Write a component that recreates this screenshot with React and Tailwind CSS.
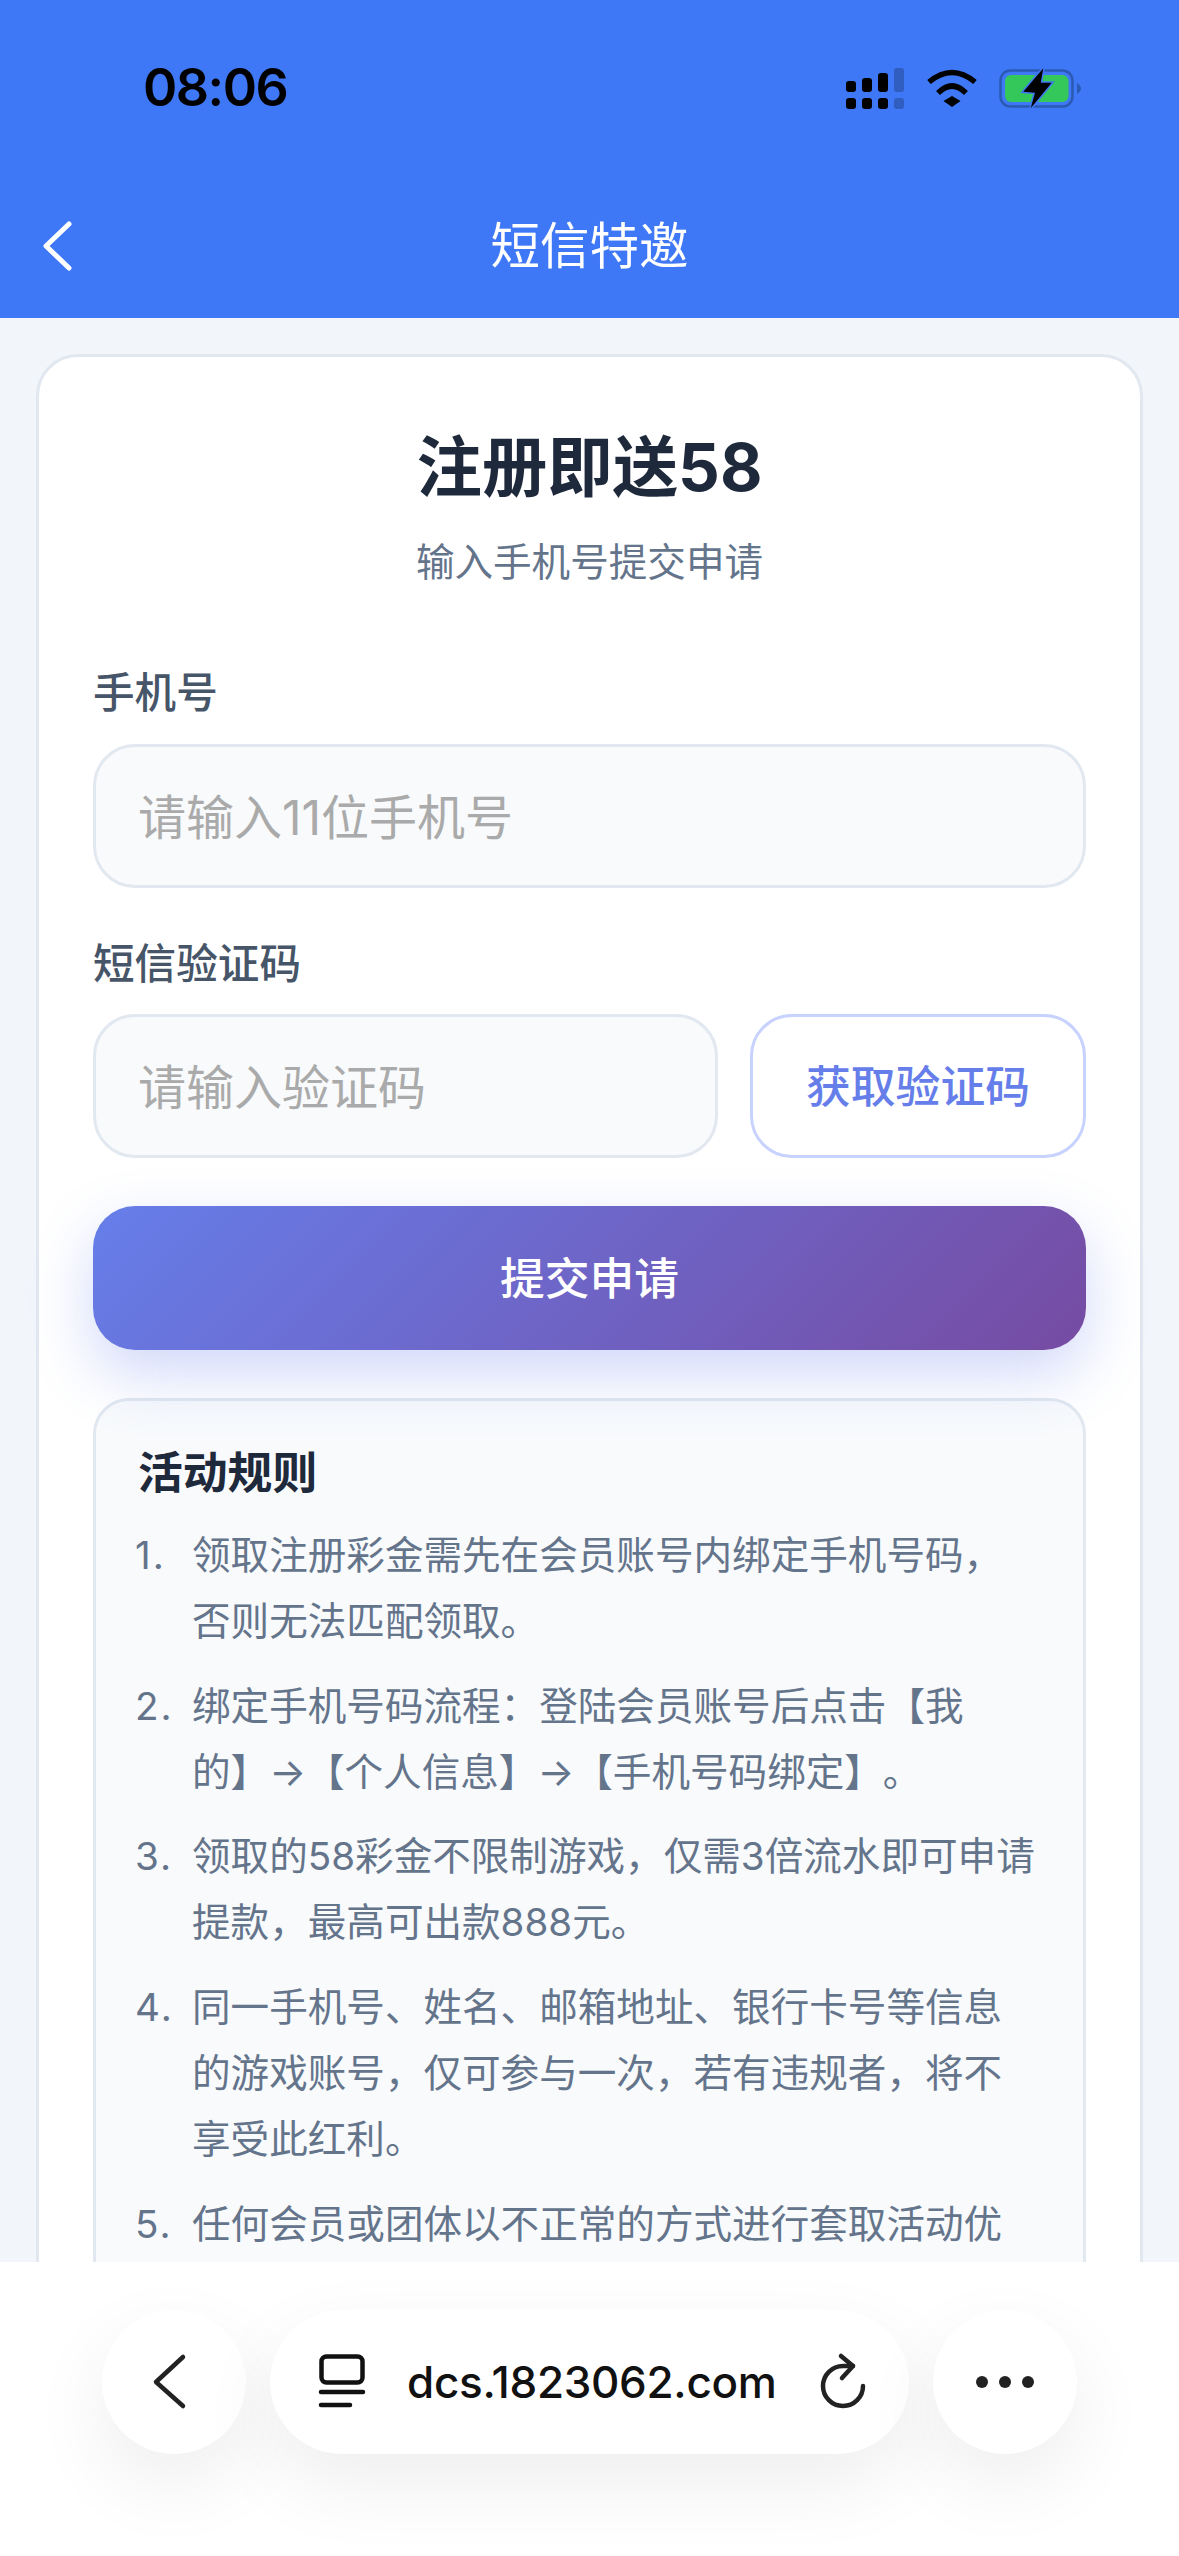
import React from "react";

const rules = [
  "领取注册彩金需先在会员账号内绑定手机号码，否则无法匹配领取。",
  "绑定手机号码流程：登陆会员账号后点击【我的】→【个人信息】→【手机号码绑定】。",
  "领取的58彩金不限制游戏，仅需3倍流水即可申请提款，最高可出款888元。",
  "同一手机号、姓名、邮箱地址、银行卡号等信息的游戏账号，仅可参与一次，若有违规者，将不享受此红利。",
  "任何会员或团体以不正常的方式进行套取活动优惠，平台保留取消资格的权利。",
];

function StatusIcons() {
  return (
    <svg viewBox="846 62 236 50" className="w-[236px] h-[50px]">
      {/* signal */}
      <rect x="846" y="80" width="10" height="11" rx="3" fill="#000" />
      <rect x="862" y="77" width="10" height="14" rx="3" fill="#000" />
      <rect x="878" y="72" width="10" height="19" rx="3" fill="#000" />
      <rect x="894" y="67" width="10" height="24" rx="3" fill="#2f5dc0" />
      <rect x="846" y="97" width="10" height="11" rx="3" fill="#000" />
      <rect x="862" y="97" width="10" height="11" rx="3" fill="#000" />
      <rect x="878" y="97" width="10" height="11" rx="3" fill="#000" />
      <rect x="894" y="97" width="10" height="11" rx="3" fill="#2f5dc0" />
      {/* wifi */}
      <path d="M929 81 Q952 62 975 81" fill="none" stroke="#000" strokeWidth="5.5" />
      <path d="M938 92 Q952 78 966 92" fill="none" stroke="#000" strokeWidth="5.5" />
      <path d="M943.5 100 L952 95 L960.5 100 L952 106 Z" fill="#000" />
      {/* battery */}
      <rect x="1000.5" y="69.5" width="72" height="36" rx="10" fill="none" stroke="#2b5ab5" strokeWidth="2.5" />
      <rect x="1005" y="74" width="63.5" height="27" rx="6" fill="#34c759" />
      <path d="M1077 82 C1080 84 1081 86 1081 87.500 C1081 89 1080 91 1077 93 Z" fill="#2b5ab5" />
      <path
        d="M1043.300 67.300 L1023.300 90.700 L1035 91.700 L1030.700 107.300 L1051.700 81.700 L1040.700 81.700 Z"
        fill="#000"
        stroke="#3f78f6"
        strokeWidth="3"
        paintOrder="stroke"
      />
    </svg>
  );
}

function FieldLabel({ children, className }) {
  return (
    <div className={`h-[60px] leading-[60px] text-[41.6px] font-medium text-[#475569] ${className}`}>
      {children}
    </div>
  );
}

function TextInput({ placeholder, className }) {
  return (
    <input
      placeholder={placeholder}
      className={`h-[144px] border-[3px] border-[#e2e8f0] rounded-[42px] bg-[#f8fafc] px-[42px] pt-[3px] text-[48px] outline-none placeholder:text-[#aaaaaa] ${className}`}
    />
  );
}

export default function App() {
  return (
    <div className="relative h-[2556px] overflow-hidden bg-[#f2f5fa] font-['Inter','Noto_Sans_CJK_SC',sans-serif] [text-spacing-trim:space-all]">
      {/* header */}
      <div className="h-[318px] bg-[#3f78f6]">
        <div className="h-[174px] pt-[53px] pl-[143px] pr-[97px]">
          <div className="flex items-center justify-between h-[70px]">
            <span className="text-[52px] font-semibold tracking-[-1.5px] text-black leading-none">08:06</span>
            <StatusIcons />
          </div>
        </div>
        <div className="grid grid-cols-[1fr_auto_1fr] items-center h-[144px] px-[42px]">
          <svg viewBox="0 0 30 52" className="w-[30px] h-[52px]">
            <path d="M27 4 L4 26 L27 48" fill="none" stroke="#fff" strokeWidth="5" strokeLinecap="round" strokeLinejoin="round" />
          </svg>
          <h1 className="text-[49.5px] font-normal text-white">短信特邀</h1>
        </div>
      </div>

      {/* card */}
      <div className="mt-[36px] mx-[36px] border-[3px] border-[#e2e8f0] rounded-[42px] bg-white pt-[66px] px-[54px] pb-[60px]">
        <h2 className="h-[90px] leading-[90px] text-center text-[65.4px] font-bold text-[#1e293b]">注册即送58</h2>
        <p className="mt-[19px] mb-[71px] h-[60px] leading-[60px] text-center text-[38.6px] text-[#64748b]">输入手机号提交申请</p>

        <FieldLabel className="mb-[21px]">手机号</FieldLabel>
        <TextInput placeholder="请输入11位手机号" className="w-full block" />

        <FieldLabel className="mt-[46px] mb-[20px]">短信验证码</FieldLabel>
        <div className="flex gap-[32px]">
          <TextInput placeholder="请输入验证码" className="flex-1 min-w-0" />
          <button className="w-[336px] h-[144px] border-[3px] border-[#c7d2fe] rounded-[42px] bg-white pt-[3px] text-[44.8px] font-medium text-[#667eea]">
            获取验证码
          </button>
        </div>

        <button className="mt-[48px] w-full h-[144px] rounded-[42px] bg-linear-[135deg,#667eea,#764ba2] pt-[3px] text-[44.8px] font-medium text-white shadow-[0_24px_60px_rgba(102,126,234,0.3)]">
          提交申请
        </button>

        {/* rules */}
        <div className="mt-[48px] border-[3px] border-[#e2e8f0] rounded-[36px] bg-[#f8fafc] pt-[43px] pl-[42px] pr-[45px] pb-[42px]">
          <h3 className="h-[58px] leading-[58px] mb-[20px] text-[44.8px] font-bold text-[#1e293b]">活动规则</h3>
          <ol>
            {rules.map((rule, i) => (
              <li key={i} className="flex mb-[18px] text-[38.6px] leading-[66.3px] text-[#64748b]">
                <span className="-ml-[3px] w-[57px] shrink-0 tracking-[2px]">{i + 1}.</span>
                <span className="flex-1 min-w-0">{rule}</span>
              </li>
            ))}
          </ol>
        </div>
      </div>

      {/* browser bar */}
      <div className="absolute inset-x-0 bottom-0 h-[294px] bg-white flex justify-center gap-[24px] pt-[48px]">
        <button className="w-[144px] h-[144px] rounded-full bg-white flex items-center justify-center shadow-[0_30px_80px_rgba(0,0,0,0.07)]">
          <svg viewBox="0 0 36 60" className="w-[36px] h-[60px] mr-[8px]">
            <path d="M31 5 L4 30 L31 54" fill="none" stroke="#222" strokeWidth="4.500" strokeLinecap="round" strokeLinejoin="round" />
          </svg>
        </button>
        <div className="w-[639px] h-[144px] rounded-full bg-white flex items-center pl-[47px] pr-[41px] shadow-[0_30px_80px_rgba(0,0,0,0.07)]">
          <svg viewBox="0 0 50 56" className="w-[50px] h-[56px] shrink-0">
            <rect x="4.500" y="2.500" width="41" height="26" rx="5" fill="none" stroke="#111" strokeWidth="4.500" />
            <path d="M4 38 H46 M4 51 H33" fill="none" stroke="#111" strokeWidth="4.500" strokeLinecap="round" />
          </svg>
          <span className="ml-[40px] text-[44px] tracking-[-0.3px] font-medium text-[#111]">dcs.1823062.com</span>
          <svg viewBox="0 0 50 60" className="ml-auto w-[50px] h-[60px] shrink-0">
            <path d="M35 14 H25 A20 20 0 1 0 45 34" fill="none" stroke="#222" strokeWidth="4.500" strokeLinecap="round" />
            <path d="M23 4 L35 14 L24 26" fill="none" stroke="#222" strokeWidth="4.500" strokeLinecap="round" strokeLinejoin="round" />
          </svg>
        </div>
        <button className="w-[144px] h-[144px] rounded-full bg-white flex items-center justify-center gap-[11px] shadow-[0_30px_80px_rgba(0,0,0,0.07)]">
          <span className="w-[12px] h-[12px] rounded-full bg-[#222]" />
          <span className="w-[12px] h-[12px] rounded-full bg-[#222]" />
          <span className="w-[12px] h-[12px] rounded-full bg-[#222]" />
        </button>
      </div>
    </div>
  );
}
